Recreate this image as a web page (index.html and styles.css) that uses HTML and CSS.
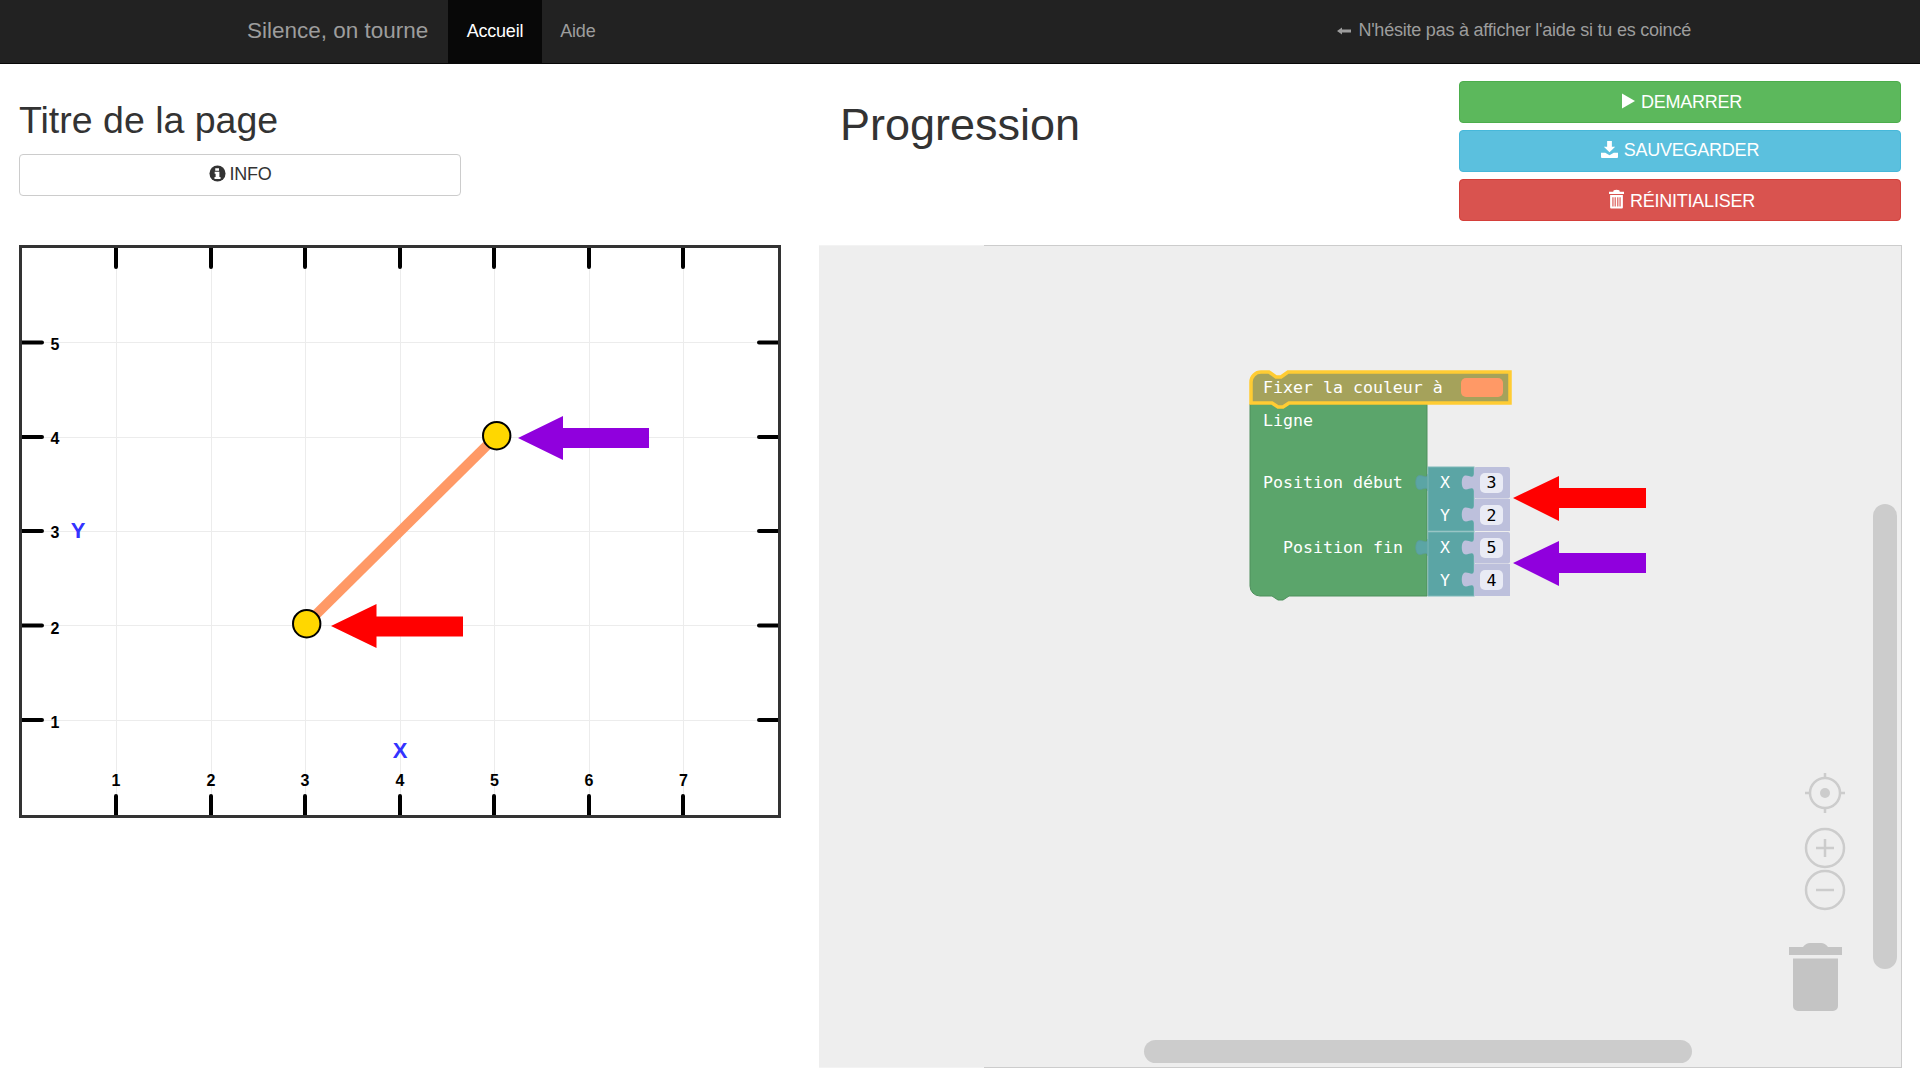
FILE: index.html
```html
<!DOCTYPE html>
<html lang="fr">
<head>
<meta charset="utf-8">
<title>Silence, on tourne</title>
<link rel="stylesheet" href="styles.css">
</head>
<body>
<nav class="navbar">
  <a class="brand">Silence, on tourne</a>
  <a class="nav-link active">Accueil</a>
  <a class="nav-link">Aide</a>
  <span class="nav-hint">
    <svg class="hint-arrow" viewBox="0 0 14 10"><path d="M0 5 L5 1.5 V3.5 H14 V6.5 H5 V8.5 Z"/></svg>
    N'hésite pas à afficher l'aide si tu es coincé
  </span>
</nav>
<main class="page">
  <section class="left">
    <h2 class="page-title">Titre de la page</h2>
    <button class="btn btn-default">
      <svg class="ico ico-info" viewBox="0 0 18 18"><circle cx="9" cy="9" r="8.5"/><path class="cut" d="M6.6 3.4h4v2.6h-4zM6 7.2h5v5.6h1.2v2H5.8v-2H7V9.2H6z"/></svg>
      INFO
    </button>
    <div class="chart">
      <svg class="chart-svg" viewBox="22 248 756 567">
        <g class="grid">
          <path d="M116.5 248V815M211.5 248V815M305.5 248V815M400.5 248V815M494.5 248V815M589.5 248V815M683.5 248V815"/>
          <path d="M22 342.5H778M22 437.5H778M22 531.5H778M22 625.5H778M22 720.5H778"/>
        </g>
        <g class="ticks">
          <path d="M116 248V267M211 248V267M305 248V267M400 248V267M494 248V267M589 248V267M683 248V267"/>
          <path d="M116 796V815M211 796V815M305 796V815M400 796V815M494 796V815M589 796V815M683 796V815"/>
          <path d="M22 342.5H42M22 437H42M22 531H42M22 625.5H42M22 720H42"/>
          <path d="M759 342.5H778M759 437H778M759 531H778M759 625.5H778M759 720H778"/>
        </g>
        <g class="num">
          <text x="116" y="786">1</text><text x="211" y="786">2</text><text x="305" y="786">3</text><text x="400" y="786">4</text><text x="494.5" y="786">5</text><text x="589" y="786">6</text><text x="683.5" y="786">7</text>
          <text x="55" y="350">5</text><text x="55" y="444">4</text><text x="55" y="538">3</text><text x="55" y="633.5">2</text><text x="55" y="727.5">1</text>
        </g>
        <text class="axis" x="400" y="758">X</text>
        <text class="axis" x="78" y="538">Y</text>
        <line class="seg" x1="306.7" y1="623.7" x2="496.7" y2="435.7"/>
        <circle class="pt" cx="496.7" cy="435.7" r="13.7"/>
        <circle class="pt" cx="306.7" cy="623.7" r="13.7"/>
        <polygon class="a-purple" points="518,438 563,416 563,428 649,428 649,448 563,448 563,460"/>
        <polygon class="a-red" points="331,626 376.5,604 376.5,616.5 463,616.5 463,636.5 376.5,636.5 376.5,648"/>
      </svg>
    </div>
  </section>
  <section class="right">
    <header class="right-head">
      <h1 class="progress-title">Progression</h1>
      <div class="actions">
        <button class="btn btn-success"><svg class="ico ico-play" viewBox="0 0 14 16"><path d="M0 0 L14 8 L0 16 Z"/></svg>DEMARRER</button>
        <button class="btn btn-info"><svg class="ico ico-dl" viewBox="0 0 18 18"><path d="M6.5 0h5v6h3.5L9 12 3 6h3.5zM0 12.5h4.5L9 15l4.5-2.5H18V17a1 1 0 0 1-1 1H1a1 1 0 0 1-1-1z"/></svg>SAUVEGARDER</button>
        <button class="btn btn-danger"><svg class="ico ico-trash" viewBox="0 0 16 20"><path fill-rule="evenodd" d="M5 .6Q8-.6 11 .6L11.5 2.2H16V4.6H0V2.2h4.5zM1.2 5.6h13.6V19a1 1 0 0 1-1 1H2.2a1 1 0 0 1-1-1zM3.6 8v10h1.2V8zM6 8v10h1.2V8zM8.8 8v10H10V8zM11.2 8v10h1.2V8z"/></svg>RÉINITIALISER</button>
      </div>
    </header>
    <div class="workspace">
      <svg class="ws-svg" viewBox="819 246 1082 821">
        <defs>
          <path id="tab" d="M0 0C-1 6-6 0-10 2-13 4-13 13-10 15-6 17-1 11 0 17z"/>
        </defs>
        <path class="blk-green" d="M1250 404H1427V596H1289l-6 4h-5l-6-4H1260a10 10 0 0 1-10-10z"/>
        <path class="blk-head" d="M1251 382a10 10 0 0 1 10-10h8l7 5h5l7-5H1510V403H1289l-6 4h-5l-6-4H1251z"/>
        <rect class="swatch" x="1461" y="378" width="42" height="19" rx="5"/>
        <use class="tab-teal" href="#tab" x="1428" y="474"/>
        <use class="tab-teal" href="#tab" x="1428" y="539"/>
        <rect class="blk-teal" x="1428" y="467" width="46" height="64"/>
        <rect class="blk-teal" x="1428" y="532" width="46" height="64"/>
        <rect class="blk-num" x="1474" y="467" width="36" height="31.5" rx="2"/>
        <rect class="blk-num" x="1474" y="499" width="36" height="32"/>
        <rect class="blk-num" x="1474" y="532" width="36" height="31.5" rx="2"/>
        <rect class="blk-num" x="1474" y="564" width="36" height="32"/>
        <use class="tab-num" href="#tab" x="1474" y="474"/>
        <use class="tab-num" href="#tab" x="1474" y="506"/>
        <use class="tab-num" href="#tab" x="1474" y="539"/>
        <use class="tab-num" href="#tab" x="1474" y="571"/>
        <rect class="field" x="1480" y="473" width="23" height="20" rx="5"/>
        <rect class="field" x="1480" y="505" width="23" height="20" rx="5"/>
        <rect class="field" x="1480" y="538" width="23" height="20" rx="5"/>
        <rect class="field" x="1480" y="570" width="23" height="20" rx="5"/>
        <g class="blk-text">
          <text x="1263" y="392.7">Fixer la couleur à</text>
          <text x="1263" y="426">Ligne</text>
          <text x="1263" y="487.7">Position début</text>
          <text x="1283" y="552.7">Position fin</text>
          <text x="1440" y="487.7">X</text>
          <text x="1440" y="520.5">Y</text>
          <text x="1440" y="552.7">X</text>
          <text x="1440" y="585.5">Y</text>
        </g>
        <g class="blk-val">
          <text x="1491.5" y="487.7">3</text>
          <text x="1491.5" y="520.5">2</text>
          <text x="1491.5" y="552.7">5</text>
          <text x="1491.5" y="585.5">4</text>
        </g>
        <polygon class="a-red" points="1513,498 1559,476 1559,488 1646,488 1646,508 1559,508 1559,521"/>
        <polygon class="a-purple" points="1513,563 1559,541 1559,553 1646,553 1646,573 1559,573 1559,586"/>
        <g class="ctrl">
          <circle cx="1825" cy="793" r="15"/>
          <path d="M1825 773V778M1825 808V813M1805 793H1810M1840 793H1845"/>
          <circle cx="1825" cy="848" r="19"/>
          <path d="M1816 848H1834M1825 839V857"/>
          <circle cx="1825" cy="890" r="19"/>
          <path d="M1816 890H1834"/>
        </g>
        <circle class="ctrl-dot" cx="1825" cy="793" r="5"/>
        <path class="bin" d="M1789 947H1803Q1806 943 1810 943H1821Q1825 943 1828 947H1842V955H1789zM1793 958.6H1838V1006a5 5 0 0 1-5 5H1798a5 5 0 0 1-5-5z"/>
        <rect class="scroll" x="1873" y="504" width="24" height="465" rx="12"/>
        <rect class="scroll" x="1144" y="1040" width="548" height="23" rx="11.5"/>
      </svg>
    </div>
  </section>
</main>
</body>
</html>
```
FILE: styles.css
```css
* { box-sizing: border-box; }
html, body { margin: 0; padding: 0; height: 100%; overflow: hidden; background: #fff; }
body { font-family: "Liberation Sans", Arial, sans-serif; font-size: 18px; color: #333; }

.navbar {
  display: flex; align-items: stretch; height: 64px;
  padding-left: 247px; padding-right: 229px;
  background: #222; border-bottom: 1px solid #080808; color: #9d9d9d;
}
.brand { font-size: 22.5px; line-height: 62px; margin-right: 19.75px; }
.nav-link { padding: 0 18.5px; line-height: 62px; letter-spacing: -0.2px; }
.nav-link.active { background: #080808; color: #fff; }
.nav-hint { margin-left: auto; padding-bottom: 2px; display: flex; align-items: center; gap: 7px; letter-spacing: -0.22px; }
.hint-arrow { width: 14px; height: 10px; fill: #9d9d9d; }

.page { display: grid; grid-template-columns: 762px 1083px; column-gap: 38px; padding-left: 19px; }

.page-title { margin: 36px 0 13px; font-size: 37.5px; line-height: 41px; font-weight: 400; }
.progress-title { margin: 36px 0 0 21px; font-size: 45px; line-height: 1.1; font-weight: 400; }

.btn {
  display: flex; align-items: center; justify-content: center; gap: 6px;
  width: 442px; height: 42px; padding: 0; border: 1px solid transparent; border-radius: 4px;
  font: inherit; letter-spacing: -0.25px; color: #fff;
}
.btn-default { background: #fff; border-color: #ccc; color: #333; gap: 4px; padding-bottom: 2px; }
.btn-success { background: #5cb85c; border-color: #4cae4c; padding-left: 4px; }
.btn-info { background: #5bc0de; border-color: #46b8da; padding-bottom: 1px; }
.btn-danger { background: #d9534f; border-color: #d43f3a; padding: 2px 0 0 4px; }

.ico { fill: currentColor; display: block; flex: none; }
.ico-info { width: 17px; height: 17px; margin-top: -1px; }
.ico-info .cut { fill: #fff; }
.ico-play { width: 13px; height: 16px; margin-top: -2px; }
.ico-dl { width: 17px; height: 17px; margin-top: -2px; }
.ico-trash { width: 15px; height: 20px; margin-top: -5px; }

.chart { margin-top: 49px; width: 762px; height: 573px; border: 3px solid #333; }
.chart-svg { display: block; width: 756px; height: 567px; }
.grid { stroke: #ececec; stroke-width: 1; fill: none; }
.ticks { stroke: #000; stroke-width: 4; stroke-linecap: round; fill: none; }
.num { font: bold 16px "Liberation Sans", Arial, sans-serif; text-anchor: middle; fill: #000; }
.axis { font: bold 22px "Liberation Sans", Arial, sans-serif; text-anchor: middle; fill: #3333ff; }
.seg { stroke: #ff9966; stroke-width: 10; }
.pt { fill: #ffd700; stroke: #000; stroke-width: 2; }
.a-red { fill: #ff0000; }
.a-purple { fill: #9000dd; }

.right-head { display: flex; justify-content: space-between; height: 181px; }
.actions { display: flex; flex-direction: column; gap: 7px; padding-top: 17px; margin-right: 1px; }
.workspace {
  position: relative; width: 1083px; height: 823px; background: #eee;
  border: 1px solid #ccc; border-left: 0;
}
.workspace::before, .workspace::after {
  content: ""; position: absolute; left: 0; width: 165px; height: 1px; background: #f3f3f3;
}
.workspace::before { top: -1px; }
.workspace::after { bottom: -1px; }
.ws-svg { display: block; width: 1082px; height: 821px; }

.blk-green { fill: #5ba56b; stroke: #4f8f5d; stroke-width: 1; }
.blk-head { fill: #a5a25b; stroke: #ffcc33; stroke-width: 3.5; }
.swatch { fill: #ff9966; }
.blk-teal, .tab-teal { fill: #5ba5a5; }
.blk-teal { stroke: #7cb7b7; stroke-width: 1; }
.tab-teal { stroke: #5a9a9a; stroke-width: 0.8; }
.blk-num, .tab-num { fill: #bdc0dc; }
.field { fill: #e9ebf5; }
.blk-text { font: 16.6px "DejaVu Sans Mono", "Liberation Mono", monospace; fill: #fff; }
.blk-val { font: 16.6px "DejaVu Sans Mono", "Liberation Mono", monospace; fill: #000; text-anchor: middle; }

.ctrl { fill: none; stroke: #ccc; stroke-width: 2.5; }
.ctrl-dot { fill: #ccc; }
.bin { fill: #c4c4c4; }
.scroll { fill: #ccc; }
```
